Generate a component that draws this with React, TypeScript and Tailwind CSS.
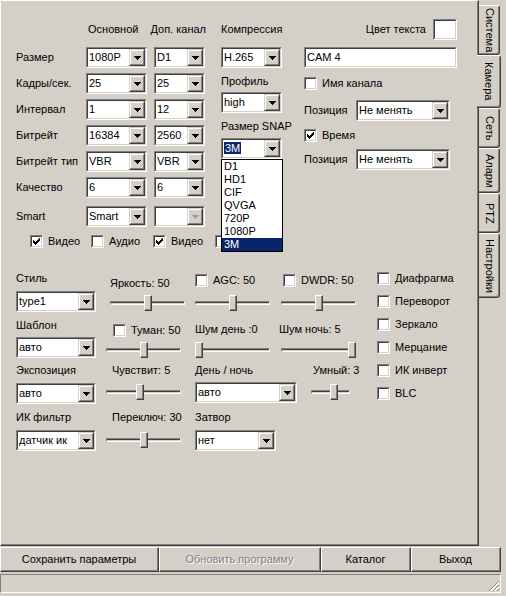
import React from "react";

function Sunken({
  className = "",
  inner = "",
  children,
}: {
  className?: string;
  inner?: string;
  children?: React.ReactNode;
}) {
  return (
    <div className={`shrink-0 border border-t-[#808080] border-l-[#808080] border-r-white border-b-white ${className}`}>
      <div className={`h-full w-full border border-t-[#404040] border-l-[#404040] border-r-[#d4d0c8] border-b-[#d4d0c8] ${inner}`}>
        {children}
      </div>
    </div>
  );
}

function Arrow({ disabled }: { disabled?: boolean }) {
  return (
    <div className="h-full w-[16px] shrink-0 border border-t-[#d4d0c8] border-l-[#d4d0c8] border-r-[#404040] border-b-[#404040] bg-[#d4d0c8]">
      <div className="flex h-full w-full items-center justify-center border border-t-white border-l-white border-r-[#808080] border-b-[#808080]">
        <svg width="7" height="4" viewBox="0 0 7 4" shapeRendering="crispEdges">
          <path d="M0 0h7v1H0zM1 1h5v1H1zM2 2h3v1H2zM3 3h1v1H3z" fill={disabled ? "#a0a0a0" : "#000"} />
        </svg>
      </div>
    </div>
  );
}

function Combo({
  w,
  value,
  disabled,
  focused,
}: {
  w: string;
  value?: string;
  disabled?: boolean;
  focused?: boolean;
}) {
  return (
    <Sunken className={`h-[21px] ${w}`} inner="flex bg-white">
      <div className="flex-1 overflow-hidden whitespace-nowrap pl-[1px] leading-[17px]">
        {focused ? <span className="bg-[#0a246a] px-[1px] text-white">{value}</span> : value}
      </div>
      <Arrow disabled={disabled} />
    </Sunken>
  );
}

function Check({ checked }: { checked?: boolean }) {
  return (
    <Sunken className="h-[13px] w-[13px]" inner="flex items-center justify-center bg-white">
      {checked && (
        <svg width="7" height="7" viewBox="0 0 7 7" shapeRendering="crispEdges">
          <path
            d="M6 0h1v3H6zM5 1h1v3H5zM4 2h1v3H4zM3 3h1v3H3zM2 4h1v3H2zM1 3h1v3H1zM0 2h1v3H0z"
            fill="#000"
          />
        </svg>
      )}
    </Sunken>
  );
}

function CheckItem({ label, checked, className = "" }: { label?: string; checked?: boolean; className?: string }) {
  return (
    <div className={`flex h-[14px] shrink-0 items-center gap-[5px] whitespace-nowrap ${className}`}>
      <Check checked={checked} />
      {label && <span className="leading-[14px]">{label}</span>}
    </div>
  );
}

function Slider({ cls, w, value, max }: { cls: string; w: number; value: number; max: number }) {
  const left = Math.round((value / max) * (w - 8));
  return (
    <div className={`relative flex h-[18px] shrink-0 items-center ${cls}`}>
      <div className="h-[4px] w-full border border-t-[#808080] border-l-[#808080] border-r-white border-b-white">
        <div className="h-full w-full border-t border-t-[#404040] bg-[#d4d0c8]" />
      </div>
      <div
        className="absolute top-[1px] h-[16px] w-[8px] border border-t-white border-l-white border-r-[#404040] border-b-[#404040] bg-[#d4d0c8]"
        style={{ left }}
      >
        <div className="h-full w-full border-r border-b border-r-[#808080] border-b-[#808080]" />
      </div>
    </div>
  );
}

function Label({ children, className = "" }: { children: React.ReactNode; className?: string }) {
  return <div className={`h-[14px] whitespace-nowrap leading-[14px] ${className}`}>{children}</div>;
}

function Btn({ w, children, disabled }: { w: string; children: React.ReactNode; disabled?: boolean }) {
  return (
    <div className={`h-full ${w} border border-t-white border-l-white border-r-[#404040] border-b-[#404040]`}>
      <div
        className={`flex h-full w-full items-center justify-center border-r border-b border-r-[#808080] border-b-[#808080] ${
          disabled ? "text-[#808080] [text-shadow:1px_1px_0_#fff]" : ""
        }`}
      >
        {children}
      </div>
    </div>
  );
}

const rows: { label: string; a: string; b: string }[] = [
  { label: "Размер", a: "1080P", b: "D1" },
  { label: "Кадры/сек.", a: "25", b: "25" },
  { label: "Интервал", a: "1", b: "12" },
  { label: "Битрейт", a: "16384", b: "2560" },
  { label: "Битрейт тип", a: "VBR", b: "VBR" },
  { label: "Качество", a: "6", b: "6" },
];

const snapItems = ["D1", "HD1", "CIF", "QVGA", "720P", "1080P", "3M"];

const tabs = [
  { label: "Система", h: "h-[50px]" },
  { label: "Камера", h: "h-[53px]", active: true },
  { label: "Сеть", h: "h-[40px]" },
  { label: "Аларм", h: "h-[45px]" },
  { label: "PTZ", h: "h-[40px]" },
  { label: "Настройки", h: "h-[65px]" },
];

export default function App() {
  return (
    <div className="flex h-[596px] w-[506px] flex-col overflow-hidden bg-[#d4d0c8] font-['Liberation_Sans',Arial,sans-serif] text-[11px] leading-[13px] text-black select-none">
      <div className="flex h-[546px] shrink-0">
        {/* main panel */}
        <div className="h-full w-[479px] shrink-0 border border-t-white border-l-white border-r-[#404040] border-b-[#404040]">
          <div className="h-full w-full border-r border-b border-r-[#808080] border-b-[#808080] pt-[17px] pl-[15px]">
            {/* upper section */}
            <div className="flex">
              <div className="flex w-[190px] shrink-0 flex-col">
                <div className="flex h-[22px] items-center whitespace-nowrap">
                  <span className="ml-[72px] w-[69px]">Основной</span>
                  <span>Доп. канал</span>
                </div>
                {rows.map((r, i) => (
                  <div key={r.label} className={`flex h-[21px] items-center ${i === 0 ? "mt-[7px]" : "mt-[5px]"}`}>
                    <span className="w-[70px] whitespace-nowrap">{r.label}</span>
                    <Combo w="w-[61px]" value={r.a} />
                    <Combo w="ml-[7px] w-[51px]" value={r.b} />
                  </div>
                ))}
                <div className="mt-[8px] flex h-[21px] items-center">
                  <span className="w-[70px]">Smart</span>
                  <Combo w="w-[61px]" value="Smart" />
                  <Combo w="ml-[7px] w-[51px]" value="" disabled />
                </div>
                <div className="mt-[7px] flex pl-[14px]">
                  <CheckItem className="w-[61px]" label="Видео" checked />
                  <CheckItem className="w-[62px]" label="Аудио" />
                  <CheckItem className="w-[62px]" label="Видео" checked />
                  {/* its label is covered by the open SNAP list */}
                  <CheckItem />
                </div>
              </div>

              {/* compression column */}
              <div className="ml-[15px] flex w-[61px] shrink-0 flex-col">
                <div className="flex h-[22px] items-center whitespace-nowrap">Компрессия</div>
                <Combo w="mt-[7px] w-[61px]" value="H.265" />
                <div className="mt-[7px] h-[13px] whitespace-nowrap">Профиль</div>
                <Combo w="mt-[4px] w-[61px]" value="high" />
                <div className="mt-[7px] h-[13px] whitespace-nowrap">Размер SNAP</div>
                <div className="relative z-20 mt-[5px]">
                  <Combo w="w-[61px]" value="3M" focused />
                  <div className="absolute top-full left-0 w-[62px] border border-black bg-white">
                    {snapItems.map((s) => (
                      <div
                        key={s}
                        className={`h-[13px] pl-[2px] leading-[13px] ${s === "3M" ? "bg-[#0a246a] text-white" : ""}`}
                      >
                        {s}
                      </div>
                    ))}
                  </div>
                </div>
              </div>

              {/* overlay column */}
              <div className="ml-[22px] flex w-[153px] shrink-0 flex-col">
                <div className="flex h-[22px] items-center justify-end whitespace-nowrap">
                  <span>Цвет текста</span>
                  <Sunken className="ml-[7px] h-[21px] w-[24px]" inner="bg-white" />
                </div>
                <Sunken className="mt-[7px] h-[21px] w-[153px]" inner="bg-white pl-[1px] leading-[17px]">
                  CAM 4
                </Sunken>
                <CheckItem className="mt-[8px]" label="Имя канала" />
                <div className="mt-[10px] flex h-[21px] items-center">
                  <span className="w-[52px]">Позиция</span>
                  <Combo w="w-[94px]" value="Не менять" />
                </div>
                <CheckItem className="mt-[7px]" label="Время" checked />
                <div className="mt-[7px] flex h-[21px] items-center">
                  <span className="w-[52px]">Позиция</span>
                  <Combo w="w-[94px]" value="Не менять" />
                </div>
              </div>
            </div>

            {/* lower section */}
            <div className="mt-[23px] flex">
              <div className="flex w-[340px] shrink-0 flex-col">
                {/* row 1 */}
                <div className="flex">
                  <div className="flex w-[80px] flex-col">
                    <Label>Стиль</Label>
                    <Combo w="mt-[6px] w-[80px]" value="type1" />
                  </div>
                  <div className="ml-[14px] flex w-[75px] flex-col">
                    <Label className="mt-[5px]">Яркость: 50</Label>
                    <Slider cls="mt-[4px] w-[75px]" w={75} value={50} max={100} />
                  </div>
                  <div className="ml-[10px] flex w-[75px] flex-col">
                    <CheckItem className="mt-[2px]" label="AGC: 50" />
                    <Slider cls="mt-[7px] w-[75px]" w={75} value={50} max={100} />
                  </div>
                  <div className="ml-[11px] flex w-[75px] flex-col">
                    <CheckItem className="mt-[2px] pl-[2px]" label="DWDR: 50" />
                    <Slider cls="mt-[7px] w-[75px]" w={75} value={50} max={100} />
                  </div>
                </div>
                {/* row 2 */}
                <div className="mt-[6px] flex">
                  <div className="flex w-[80px] flex-col">
                    <Label>Шаблон</Label>
                    <Combo w="mt-[5px] w-[80px]" value="авто" />
                  </div>
                  <div className="ml-[10px] flex w-[75px] flex-col">
                    <CheckItem className="mt-[5px] pl-[7px]" label="Туман: 50" />
                    <Slider cls="mt-[4px] w-[75px]" w={75} value={50} max={100} />
                  </div>
                  <div className="ml-[14px] flex w-[75px] flex-col">
                    <Label className="mt-[4px]">Шум день :0</Label>
                    <Slider cls="mt-[5px] w-[75px]" w={75} value={0} max={100} />
                  </div>
                  <div className="ml-[11px] flex w-[75px] flex-col">
                    <Label className="mt-[4px] -ml-[2px]">Шум ночь: 5</Label>
                    <Slider cls="mt-[5px] w-[75px]" w={75} value={5} max={5} />
                  </div>
                </div>
                {/* row 3 */}
                <div className="mt-[4px] flex">
                  <div className="flex w-[80px] flex-col">
                    <Label>Экспозиция</Label>
                    <Combo w="mt-[6px] w-[80px]" value="авто" />
                  </div>
                  <div className="ml-[10px] flex w-[75px] flex-col">
                    <Label className="pl-[6px]">Чувствит: 5</Label>
                    <Slider cls="mt-[6px] w-[75px]" w={75} value={5} max={11} />
                  </div>
                  <div className="ml-[14px] flex w-[102px] flex-col">
                    <Label>День / ночь</Label>
                    <Combo w="mt-[5px] w-[102px]" value="авто" />
                  </div>
                  <div className="ml-[14px] flex w-[45px] flex-col">
                    <Label className="pl-[2px]">Умный: 3</Label>
                    <Slider cls="mt-[6px] w-[39px]" w={39} value={3} max={5} />
                  </div>
                </div>
                {/* row 4 */}
                <div className="mt-[6px] flex">
                  <div className="flex w-[80px] flex-col">
                    <Label>ИК фильтр</Label>
                    <Combo w="mt-[6px] w-[80px]" value="датчик ик" />
                  </div>
                  <div className="ml-[10px] flex w-[75px] flex-col">
                    <Label className="pl-[6px]">Переключ: 30</Label>
                    <Slider cls="mt-[7px] w-[75px]" w={75} value={30} max={60} />
                  </div>
                  <div className="ml-[14px] flex w-[81px] flex-col">
                    <Label>Затвор</Label>
                    <Combo w="mt-[6px] w-[81px]" value="нет" />
                  </div>
                </div>
              </div>

              <div className="ml-[21px] flex flex-col gap-[9px]">
                <CheckItem label="Диафрагма" />
                <CheckItem label="Переворот" />
                <CheckItem label="Зеркало" />
                <CheckItem label="Мерцание" />
                <CheckItem label="ИК инверт" />
                <CheckItem label="BLC" />
              </div>
            </div>
          </div>
        </div>

        {/* vertical tabs */}
        <div className="flex flex-col pt-[5px]">
          {tabs.map((t) =>
            t.active ? (
              <div
                key={t.label}
                className={`relative z-10 -ml-[2px] flex w-[24px] items-center justify-center rounded-r-[3px] border-t border-r border-b border-t-white border-r-[#404040] border-b-[#404040] bg-[#d4d0c8] shadow-[inset_-1px_-1px_0_#808080] ${t.h}`}
              >
                <span className="[writing-mode:vertical-rl]">{t.label}</span>
              </div>
            ) : (
              <div
                key={t.label}
                className={`flex w-[21px] items-center justify-center rounded-r-[3px] border-t border-r border-b border-t-white border-r-[#404040] border-b-[#404040] shadow-[inset_-1px_-1px_0_#808080] ${t.h}`}
              >
                <span className="[writing-mode:vertical-rl]">{t.label}</span>
              </div>
            )
          )}
        </div>
      </div>

      {/* buttons */}
      <div className="mt-[1px] flex h-[25px] shrink-0">
        <Btn w="w-[159px]">Сохранить параметры</Btn>
        <Btn w="w-[162px]" disabled>
          Обновить программу
        </Btn>
        <Btn w="w-[90px]">Каталог</Btn>
        <Btn w="w-[90px]">Выход</Btn>
      </div>

      {/* status bar */}
      <div className="mt-[2px] flex h-[19px] w-[501px] shrink-0 items-end justify-end border border-t-[#808080] border-l-[#808080] border-r-white border-b-white">
        <svg width="12" height="12" viewBox="0 0 12 12" shapeRendering="crispEdges">
          <path d="M11 1L1 11M11 5L5 11M11 9L9 11" stroke="#808080" strokeWidth="1.4" />
          <path d="M11 2.5L2.5 11M11 6.5L6.5 11M11 10.5L10.5 11" stroke="#fff" strokeWidth="1" />
        </svg>
      </div>
    </div>
  );
}
